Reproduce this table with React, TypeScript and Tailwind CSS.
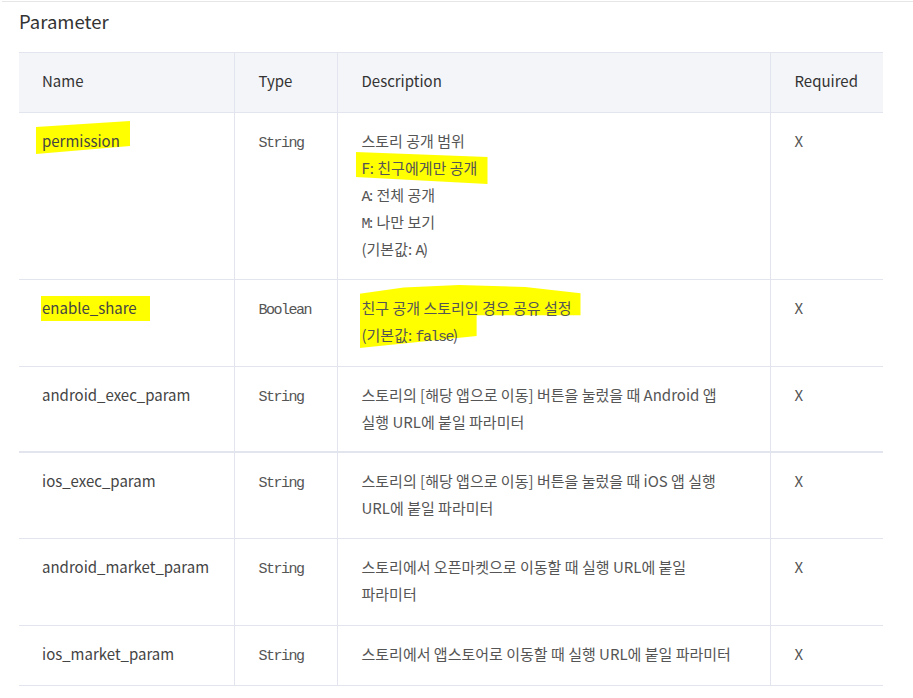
import React from "react";

const sans = "font-['Noto_Sans_CJK_KR','Noto_Sans',sans-serif]";
const mono = "font-['Liberation_Mono','DejaVu_Sans_Mono',monospace]";

function M({ children }: { children: React.ReactNode }) {
  return <span className={`${mono} text-[15px] leading-none tracking-[-1.5px]`}>{children}</span>;
}

function L({ children }: { children: React.ReactNode }) {
  return <div className="relative h-[27px] whitespace-nowrap">{children}</div>;
}

type Row = {
  name: React.ReactNode;
  type: string;
  desc: React.ReactNode;
  pb: string;
};

const rows: Row[] = [
  {
    name: (
      <span className="relative inline-block">
        <span className="absolute left-[-6px] top-[-6px] w-[94px] h-[33px] bg-[#ffff00] [clip-path:polygon(0_18%,100%_0,100%_76%,0_100%)]" />
        <span className="relative">permission</span>
      </span>
    ),
    type: "String",
    pb: "pb-[17px]",
    desc: (
      <div className="relative">
        <span className="absolute left-[-6px] top-[25px] w-[132px] h-[32px] bg-[#ffff00] [clip-path:polygon(0_0,100%_16%,100%_100%,0_78%)]" />
        <L>스토리 공개 범위</L>
        <L>F: 친구에게만 공개</L>
        <L>
          <M>A</M>: 전체 공개
        </L>
        <L>
          <M>M</M>: 나만 보기
        </L>
        <L>
          (기본값: <M>A</M>)
        </L>
      </div>
    ),
  },
  {
    name: (
      <span className="relative inline-block">
        <span className="absolute left-[-1px] top-[2px] w-[109px] h-[25px] bg-[#ffff00]" />
        <span className="relative">enable_share</span>
      </span>
    ),
    type: "Boolean",
    pb: "pb-[18px]",
    desc: (
      <div className="relative">
        <span className="absolute left-[-2px] top-[-9px] w-[221px] h-[63px] bg-[#ffff00] [clip-path:polygon(0_14%,20%_4%,45%_0,75%_3%,100%_13%,100%_48%,53%_48%,53%_81%,0_100%)]" />
        <L>친구 공개 스토리인 경우 공유 설정</L>
        <L>
          (기본값: <M>false</M>)
        </L>
      </div>
    ),
  },
  {
    name: "android_exec_param",
    type: "String",
    pb: "pb-[16px]",
    desc: (
      <div>
        <L>스토리의 [해당 앱으로 이동] 버튼을 눌렀을 때 Android 앱</L>
        <L>실행 URL에 붙일 파라미터</L>
      </div>
    ),
  },
  {
    name: "ios_exec_param",
    type: "String",
    pb: "pb-[17px]",
    desc: (
      <div>
        <L>스토리의 [해당 앱으로 이동] 버튼을 눌렀을 때 iOS 앱 실행</L>
        <L>URL에 붙일 파라미터</L>
      </div>
    ),
  },
  {
    name: "android_market_param",
    type: "String",
    pb: "pb-[18px]",
    desc: (
      <div>
        <L>스토리에서 오픈마켓으로 이동할 때 실행 URL에 붙일</L>
        <L>파라미터</L>
      </div>
    ),
  },
  {
    name: "ios_market_param",
    type: "String",
    pb: "pb-[18px]",
    desc: (
      <div>
        <L>스토리에서 앱스토어로 이동할 때 실행 URL에 붙일 파라미터</L>
      </div>
    ),
  },
];

export default function App() {
  return (
    <div className={`${sans} w-[913px] h-[698px] bg-white overflow-hidden`}>
      <div className="mt-px border-t border-[#e6e6e6] ml-[2px]" />
      <div className="pl-[19px] pr-[30px]">
        <h2 className="pt-[6px] mb-[17px] text-[18.5px] leading-[27px] text-[#333]">Parameter</h2>
        <table className="w-[864px] border-collapse table-fixed text-[15px] leading-[27px]">
          <colgroup>
            <col className="w-[215px]" />
            <col className="w-[103px]" />
            <col className="w-[433px]" />
            <col className="w-[113px]" />
          </colgroup>
          <thead>
            <tr className="bg-[#f4f5f9] border-t border-b border-[#e2e4ee] text-[#333]">
              <th className="text-left font-normal pl-[23px] pt-[14px] pb-[18px] h-[60px]">Name</th>
              <th className="text-left font-normal pl-6 pt-[14px] pb-[18px] border-l border-[#e2e4ee]">Type</th>
              <th className="text-left font-normal pl-6 pt-[14px] pb-[18px] border-l border-[#e2e4ee]">Description</th>
              <th className="text-left font-normal pl-6 pt-[14px] pb-[18px] border-l border-[#e2e4ee]">Required</th>
            </tr>
          </thead>
          <tbody className="text-[#555]">
            {rows.map((r, i) => (
              <tr
                key={i}
                className={`align-top border-[#e2e4ee] ${i === 2 ? "border-b-2" : "border-b"}`}
              >
                <td className={`pl-[23px] pt-[14px] ${r.pb} text-[#444]`}>{r.name}</td>
                <td className={`pl-6 pt-[14px] ${r.pb} border-l border-[#e2e4ee] text-[#555]`}>
                  <M>{r.type}</M>
                </td>
                <td className={`pl-6 pr-2 pt-[14px] ${r.pb} border-l border-[#e2e4ee]`}>{r.desc}</td>
                <td className={`pl-6 pt-[14px] ${r.pb} border-l border-[#e2e4ee]`}>X</td>
              </tr>
            ))}
          </tbody>
        </table>
      </div>
    </div>
  );
}
